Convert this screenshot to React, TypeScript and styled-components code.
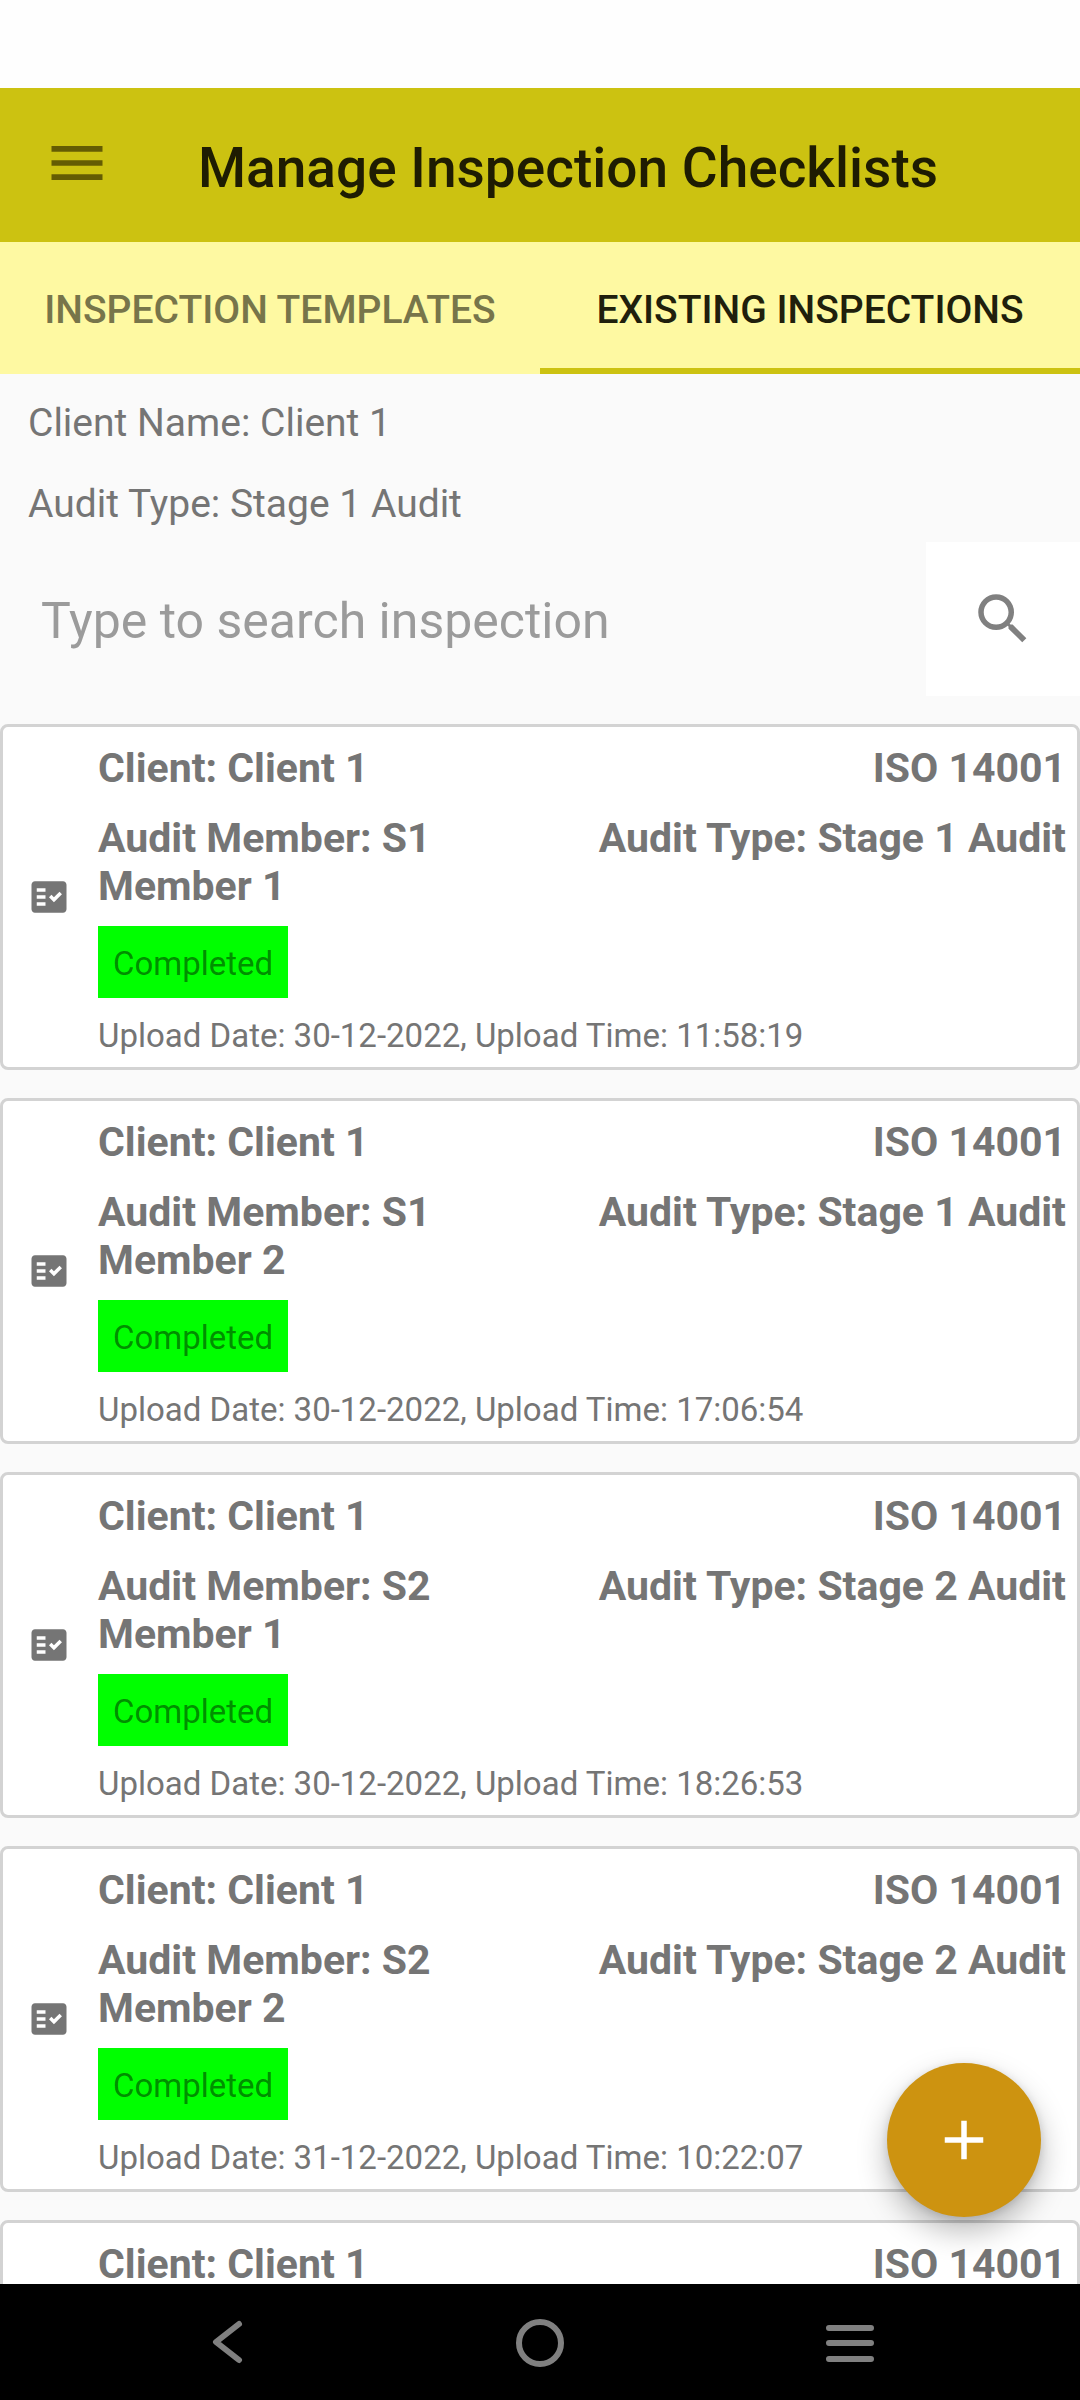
import React, { useState } from "react";
import styled, { createGlobalStyle } from "styled-components";
import { MdAdd, MdFactCheck, MdMenu, MdSearch } from "react-icons/md";

const GlobalStyle = createGlobalStyle`
  *, *::before, *::after { box-sizing: border-box; }
  html, body, #root { height: 100%; }
  body { margin: 0; background: #fafafa; }
  body, button, input { font-family: Roboto, "Noto Sans", sans-serif; }
  button { border: 0; padding: 0; background: none; cursor: pointer; }
  h1, h2, p, ul { margin: 0; padding: 0; }
`;

const Screen = styled.div`
  display: flex;
  flex-direction: column;
  height: 100vh;
  overflow: hidden;
  color: #757575;
`;

const StatusBar = styled.div`
  flex: none;
  height: 88px;
  background: #fefefe;
`;

const AppBar = styled.header`
  flex: none;
  display: flex;
  align-items: center;
  gap: 87px;
  height: 154px;
  padding: 0 43px;
  background: #ccc211;
`;

const MenuButton = styled.button`
  display: flex;
  color: #645c03;
  font-size: 68px;
  padding-bottom: 4px;
`;

const Title = styled.h1`
  padding-top: 6px;
  color: #1e1c02;
  font-size: 55px;
  line-height: 64px;
  font-weight: 500;
  white-space: nowrap;
`;

const Tabs = styled.div`
  flex: none;
  display: flex;
  height: 132px;
  background: #fef9a2;
`;

const Tab = styled.button<{ $active: boolean }>`
  flex: 1;
  padding-top: 4px;
  color: ${(p) => (p.$active ? "#201f0c" : "#77754a")};
  box-shadow: ${(p) => (p.$active ? "inset 0 -6px 0 #ccc211" : "none")};
  font-size: 39px;
  font-weight: 500;
  text-transform: uppercase;
  white-space: nowrap;
`;

const Content = styled.main`
  position: relative;
  flex: 1;
  min-height: 0;
`;

const Scroller = styled.div`
  height: 100%;
  overflow-y: auto;
  scrollbar-width: none;
`;

const Summary = styled.div`
  display: flex;
  flex-direction: column;
  gap: 35px;
  padding: 26px 28px 15px;
  font-size: 39px;
  line-height: 46px;
`;

const SearchRow = styled.form`
  display: flex;
  height: 154px;
  margin-bottom: 28px;
`;

const SearchInput = styled.input`
  flex: 1;
  min-width: 0;
  border: 0;
  outline: 0;
  padding: 4px 41px 0;
  background: transparent;
  color: #212121;
  font-size: 50px;
  &::placeholder {
    color: #9b9b9b;
    opacity: 1;
  }
`;

const SearchButton = styled.button`
  display: flex;
  align-items: center;
  justify-content: center;
  width: 154px;
  background: #fff;
  color: #808080;
  font-size: 66px;
`;

const List = styled.ul`
  display: flex;
  flex-direction: column;
  gap: 28px;
  list-style: none;
`;

const Card = styled.li`
  display: flex;
  align-items: center;
  gap: 28px;
  padding: 0 11px 0 25px;
  border: 3px solid #d3d3d3;
  border-radius: 8px;
  background: #fff;
`;

const CardIcon = styled.span`
  flex: none;
  display: flex;
  font-size: 42px;
`;

const CardBody = styled.div`
  flex: 1;
  display: flex;
  flex-direction: column;
  align-items: flex-start;
  padding: 17px 0 12px;
`;

const Details = styled.div`
  align-self: stretch;
  display: grid;
  grid-template-columns: 1fr 1fr;
  row-gap: 22px;
  margin-bottom: 16px;
  font-size: 41px;
  line-height: 48px;
  font-weight: 700;
`;

const Trailing = styled.p`
  justify-self: end;
  white-space: nowrap;
`;

const Badge = styled.span`
  margin-bottom: 18px;
  padding: 18px 15px 15px;
  background: #00ff00;
  color: rgba(0, 0, 0, 0.46);
  font-size: 33px;
  line-height: 39px;
`;

const Upload = styled.p`
  font-size: 33px;
  line-height: 39px;
`;

const AddButton = styled.button`
  position: absolute;
  right: 39px;
  bottom: 67px;
  display: flex;
  align-items: center;
  justify-content: center;
  width: 154px;
  height: 154px;
  border-radius: 50%;
  background: #cd9310;
  color: #fff;
  font-size: 66px;
  box-shadow: 0 14px 30px rgba(0, 0, 0, 0.28), 0 2px 8px rgba(0, 0, 0, 0.12);
`;

const SystemNav = styled.nav`
  flex: none;
  display: flex;
  height: 116px;
  padding: 0 72px;
  background: #000;
`;

const NavButton = styled.button`
  flex: 1;
  display: flex;
  align-items: center;
  justify-content: center;
`;

const NavIcon = styled.svg`
  width: 60px;
  height: 60px;
  fill: none;
  stroke: #808080;
  stroke-width: 6;
  stroke-linecap: round;
  stroke-linejoin: round;
`;

type Inspection = {
  id: number;
  member?: string;
  stage?: string;
  date?: string;
  time?: string;
};

const inspections: Inspection[] = [
  { id: 1, member: "S1 Member 1", stage: "Stage 1 Audit", date: "30-12-2022", time: "11:58:19" },
  { id: 2, member: "S1 Member 2", stage: "Stage 1 Audit", date: "30-12-2022", time: "17:06:54" },
  { id: 3, member: "S2 Member 1", stage: "Stage 2 Audit", date: "30-12-2022", time: "18:26:53" },
  { id: 4, member: "S2 Member 2", stage: "Stage 2 Audit", date: "31-12-2022", time: "10:22:07" },
  { id: 5 },
];

const tabs = ["Inspection Templates", "Existing Inspections"];

function InspectionCard({ item }: { item: Inspection }) {
  return (
    <Card>
      <CardIcon>{item.member ? <MdFactCheck /> : <MdFactCheck visibility="hidden" />}</CardIcon>
      <CardBody>
        <Details>
          <p>Client: Client 1</p>
          <Trailing>ISO 14001</Trailing>
          {item.member && (
            <>
              <p>Audit Member: {item.member}</p>
              <Trailing>Audit Type: {item.stage}</Trailing>
            </>
          )}
        </Details>
        {item.date && (
          <>
            <Badge>Completed</Badge>
            <Upload>
              Upload Date: {item.date}, Upload Time: {item.time}
            </Upload>
          </>
        )}
      </CardBody>
    </Card>
  );
}

export default function App() {
  const [active, setActive] = useState(1);
  const [query, setQuery] = useState("");

  return (
    <Screen>
      <GlobalStyle />
      <StatusBar />
      <AppBar>
        <MenuButton aria-label="Open menu">
          <MdMenu />
        </MenuButton>
        <Title>Manage Inspection Checklists</Title>
      </AppBar>
      <Tabs role="tablist">
        {tabs.map((label, i) => (
          <Tab
            key={label}
            role="tab"
            aria-selected={i === active}
            $active={i === active}
            onClick={() => setActive(i)}
          >
            {label}
          </Tab>
        ))}
      </Tabs>
      <Content>
        <Scroller>
          <Summary>
            <p>Client Name: Client 1</p>
            <p>Audit Type: Stage 1 Audit</p>
          </Summary>
          <SearchRow role="search" onSubmit={(e) => e.preventDefault()}>
            <SearchInput
              aria-label="Search inspection"
              placeholder="Type to search inspection"
              value={query}
              onChange={(e) => setQuery(e.target.value)}
            />
            <SearchButton type="submit" aria-label="Search">
              <MdSearch />
            </SearchButton>
          </SearchRow>
          <List>
            {inspections.map((item) => (
              <InspectionCard key={item.id} item={item} />
            ))}
          </List>
        </Scroller>
        <AddButton aria-label="Add inspection">
          <MdAdd />
        </AddButton>
      </Content>
      <SystemNav aria-label="System">
        <NavButton aria-label="Back">
          <NavIcon viewBox="0 0 60 60">
            <path d="M41 12 L18 30 L41 48" />
          </NavIcon>
        </NavButton>
        <NavButton aria-label="Home">
          <NavIcon viewBox="0 0 60 60">
            <circle cx="30" cy="31" r="21" />
          </NavIcon>
        </NavButton>
        <NavButton aria-label="Recent apps">
          <NavIcon viewBox="0 0 60 60">
            <path d="M7 16 H49 M7 31 H49 M7 47 H49" />
          </NavIcon>
        </NavButton>
      </SystemNav>
    </Screen>
  );
}
